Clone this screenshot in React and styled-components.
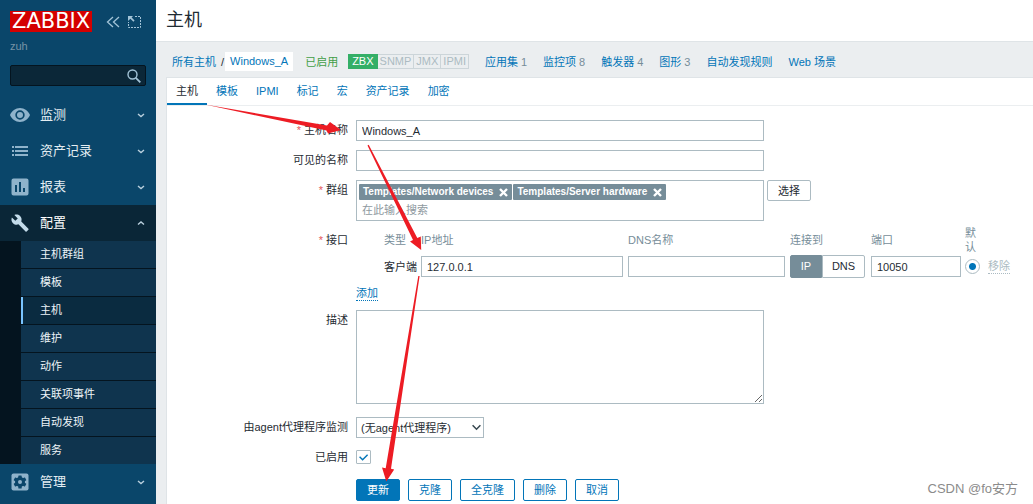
import React from "react";
import styled, { createGlobalStyle } from 'styled-components';

const GlobalStyle = createGlobalStyle`
* { box-sizing: border-box; }
body {
  margin: 0;
  background: #ebeef0;
  color: #1f2c33;
  font-family: "Liberation Sans", Arial, "Noto Sans CJK SC", sans-serif;
  font-size: 11px;
  line-height: 14px;
  overflow: hidden;
}
button, input, select, textarea { font: inherit; color: inherit; margin: 0; }
`;

const Page = styled.div`
display: flex;
position: relative;
height: 100vh;
overflow: hidden;
`;

const Sidebar = styled.aside`
display: flex;
flex-direction: column;
flex: 0 0 156px;
min-width: 0;
background: #0a466a;
`;

const SidebarHeader = styled.div`
display: flex;
align-items: center;
padding: 11px 14px 0 10px;
`;

const Logo = styled.a`
padding: 0 2px;
margin-right: 14px;
background: #d40000;
color: #fff;
font-family: "DejaVu Sans", sans-serif;
font-size: 21px;
line-height: 21px;
text-decoration: none;
`;

const IconButton = styled.button`
display: flex;
flex-shrink: 0;
padding: 0;
margin-left: ${props => props.$gap || 0}px;
border: 0;
background: none;
color: #a3c4d8;
cursor: pointer;
`;

const ServerName = styled.div`
padding: 7px 10px 0;
color: #7894a6;
`;

const SearchForm = styled.form`
display: flex;
align-items: center;
height: 21px;
margin: 12px 10px 11px;
padding-right: 4px;
border: 1px solid #04141f;
border-radius: 2px;
background: #0b2738;
`;

const SearchInput = styled.input`
flex: 1;
width: 100%;
min-width: 0;
border: 0;
outline: none;
background: none;
color: #fff;
`;

const MenuItem = styled.a`
display: flex;
align-items: center;
flex: 0 0 36px;
padding: 0 10px;
background: ${props => props.$active ? '#0a2637' : 'transparent'};
color: ${props => props.$active ? '#fff' : '#e4edf2'};
font-size: 13px;
text-decoration: none;
`;

const MenuIcon = styled.span`
display: flex;
justify-content: center;
width: 20px;
margin-right: 10px;
color: ${props => props.$active ? '#c3dbea' : '#8fb3cb'};
`;

const MenuText = styled.span`
flex: 1;
`;

const SubMenu = styled.nav`
display: flex;
flex-direction: column;
gap: 1px;
padding-left: 21px;
background: #04141f;
`;

const SubMenuItem = styled.a`
height: 27px;
padding-left: 17px;
border-left: 2px solid ${props => props.$selected ? '#79c4ff' : '#0f344e'};
background: ${props => props.$selected ? '#0a2b40' : '#0f344e'};
color: #eef4f8;
line-height: 26px;
text-decoration: none;
`;

const Main = styled.main`
flex: 1;
min-width: 0;
display: flex;
flex-direction: column;
`;

const TitleBar = styled.header`
height: 42px;
padding: 0 10px;
border-bottom: 1px solid #dfe4e7;
background: #fff;
`;

const Title = styled.h1`
margin: 0;
font-size: 18px;
font-weight: normal;
line-height: 40px;
`;

const Breadcrumbs = styled.nav`
display: flex;
align-items: center;
height: 35px;
padding: 4px 16px 0;
gap: 16px;
white-space: nowrap;
`;

const Path = styled.div`
display: flex;
align-items: center;
gap: 5px;
margin-right: -4px;
`;

const Link = styled.a`
color: #0275b8;
text-decoration: none;
`;

const CurrentHost = styled(Link)`
padding: 0 5px;
margin-left: -4px;
background: #fff;
line-height: 19px;
`;

const Status = styled.span`
color: #429e47;
margin-right: -6px;
`;

const Count = styled.span`
margin-left: 3px;
color: #768d99;
`;

const Availability = styled.div`
display: flex;
`;

const Badge = styled.span`
height: 15px;
padding: 0 ${props => props.$on ? 3 : 2}px;
border: 1px solid ${props => props.$on ? '#34af67' : '#ccd5d9'};
border-left-width: ${props => props.$on ? 1 : 0}px;
background: ${props => props.$on ? '#34af67' : '#ebeef0'};
color: ${props => props.$on ? '#fff' : '#acbbc2'};
line-height: 13px;
`;

const Card = styled.section`
flex: 1;
margin-left: 10px;
border: solid #dfe4e7;
border-width: 1px 0 0 1px;
background: #fff;
`;

const Tabs = styled.div`
display: flex;
border-bottom: 1px solid #ebeef0;
`;

const Tab = styled.button`
height: 27px;
padding: 0 9px;
border: 0;
border-bottom: 2px solid ${props => props.$active ? '#0275b8' : 'transparent'};
background: none;
color: ${props => props.$active ? '#1f2c33' : '#0275b8'};
cursor: pointer;
`;

const Form = styled.form`
display: grid;
grid-template-columns: 181px minmax(0, 1fr);
column-gap: 8px;
row-gap: 9px;
padding-top: 14px;
`;

const Label = styled.label`
padding-top: ${props => props.$top || 3}px;
text-align: right;
${props => props.$required && `
&::before { content: "* "; color: #e45959; }
`}
`;

const Field = styled.div`
display: flex;
align-items: flex-start;
gap: 3px;
padding-top: ${props => props.$top || 0}px;
`;

const TextInput = styled.input`
display: block;
width: ${props => props.$width || '408px'};
height: 21px;
padding: 0 5px;
border: 1px solid #acbbc2;
border-radius: 0;
background: #fff;
`;

const TextArea = styled.textarea`
width: 408px;
height: 94px;
padding: 4px 5px;
border: 1px solid #acbbc2;
`;

const MultiSelect = styled.div`
width: 408px;
height: 41px;
border: 1px solid #acbbc2;
`;

const Tags = styled.ul`
display: flex;
gap: 1px;
margin: 0;
padding: 3px 2px 2px;
list-style: none;
`;

const Tag = styled.li`
display: flex;
align-items: center;
height: 16px;
padding: 0 4px;
border-radius: 1px;
background: #768d99;
color: #fff;
font-weight: bold;
font-size: 10px;
`;

const TagRemove = styled.button`
display: flex;
padding: 0;
margin-left: 6px;
border: 0;
background: none;
`;

const GroupInput = styled.input`
display: block;
width: 100%;
height: 16px;
padding: 0 5px;
border: 0;
outline: none;
background: none;
&::placeholder { color: #8f9a9f; opacity: 1; }
`;

const Button = styled.button`
height: ${props => props.$grey ? 21 : 22}px;
padding: 0 10px;
border: 1px solid ${props => props.$grey ? '#acbbc2' : '#0275b8'};
border-radius: 2px;
background: ${props => props.$primary ? '#0275b8' : '#fff'};
color: ${props => props.$primary ? '#fff' : props.$grey ? '#1f2c33' : '#0275b8'};
line-height: 18px;
cursor: pointer;
`;

const Actions = styled.div`
grid-column: 2;
display: flex;
gap: 8px;
padding-top: 3px;
`;

const InterfaceBlock = styled.div`
display: flex;
flex-direction: column;
align-items: flex-start;
`;

const InterfaceTable = styled.table`
table-layout: fixed;
width: 656px;
border-collapse: collapse;
margin-top: -5px;
th {
  height: 29px;
  padding: 0;
  color: #768d99;
  font-weight: normal;
  text-align: left;
}
td {
  height: 25px;
  padding: 0;
}
th:first-child, td:first-child { padding-left: 28px; }
`;

const DefaultText = styled.div`
width: 12px;
`;

const Segments = styled.div`
display: flex;
width: 75px;
`;

const SegmentInput = styled.input`
appearance: none;
position: absolute;
`;

const Segment = styled.label`
flex: ${props => props.$active ? '0 0 32px' : 1};
height: 23px;
border: 1px solid ${props => props.$active ? '#768d99' : '#acbbc2'};
border-radius: ${props => props.$active ? '2px 0 0 2px' : '0 2px 2px 0'};
background: ${props => props.$active ? '#768d99' : '#fff'};
color: ${props => props.$active ? '#fff' : '#1f2c33'};
line-height: 21px;
text-align: center;
`;

const Radio = styled.input`
appearance: none;
display: block;
width: 15px;
height: 15px;
border: 1px solid #acbbc2;
border-radius: 50%;
background: radial-gradient(circle, #0275b8 3px, #fff 4px);
`;

const DottedLink = styled.button`
padding: 0;
border: 0;
border-bottom: 1px dotted;
background: none;
color: ${props => props.$disabled ? '#acbbc2' : '#0275b8'};
line-height: 14px;
cursor: pointer;
`;

const AddRow = styled.div`
padding-top: 7px;
`;

const SelectWrapper = styled.div`
position: relative;
width: 128px;
svg {
  position: absolute;
  right: 3px;
  top: 7px;
  pointer-events: none;
}
`;

const Select = styled.select`
appearance: none;
display: block;
width: 100%;
height: 21px;
padding: 0 18px 0 4px;
border: 1px solid #acbbc2;
border-radius: 0;
background: #fff;
`;

const CheckWrapper = styled.div`
position: relative;
height: 15px;
margin: 3px 0 2px;
svg {
  position: absolute;
  left: 3px;
  top: 4px;
  pointer-events: none;
}
`;

const Checkbox = styled.input`
appearance: none;
display: block;
width: 15px;
height: 14px;
border: 1px solid #acbbc2;
border-radius: 1px;
background: #fff;
`;

const Arrows = styled.svg`
position: absolute;
left: 0;
top: 0;
pointer-events: none;
`;

const Watermark = styled.div`
position: absolute;
right: 15px;
bottom: 7px;
color: #8b8b8b;
font-size: 13px;
line-height: 16px;
`;

const EyeIcon = () => (
    <svg width="20" height="14" viewBox="0 0 20 14">
        <path fill="currentColor" fillRule="evenodd" d="M10 0C5.500 0 1.700 2.900 0 7c1.700 4.100 5.500 7 10 7s8.300-2.900 10-7c-1.700-4.100-5.500-7-10-7zm0 11.700a4.700 4.700 0 1 1 0-9.400 4.700 4.700 0 0 1 0 9.400zM10 4a3 3 0 1 0 0 6 3 3 0 0 0 0-6z"/>
    </svg>
);

const ListIcon = () => (
    <svg width="18" height="12" viewBox="0 0 18 12" fill="currentColor">
        <path d="M1 1h2v2H1zM1 5h2v2H1zM1 9h2v2H1zM4 1h13v2H4zM4 5h13v2H4zM4 9h13v2H4z"/>
    </svg>
);

const ReportIcon = () => (
    <svg width="18" height="18" viewBox="0 0 18 18">
        <path fill="currentColor" fillRule="evenodd" d="M2.500.500h13a2 2 0 0 1 2 2v13a2 2 0 0 1-2 2h-13a2 2 0 0 1-2-2v-13a2 2 0 0 1 2-2zM4 7v7h2V7zm4-3v10h2V4zm4 6v4h2v-4z"/>
    </svg>
);

const WrenchIcon = () => (
    <svg width="18" height="18" viewBox="0 0 24 24">
        <path fill="currentColor" d="M23.200 19.500l-9.500-9.500c.9-2.400.4-5.200-1.600-7.200C10 .700 7 .300 4.500 1.400L9 5.900 5.800 9.100 1.200 4.600C0 7.100.600 10.100 2.700 12.200c2 2 4.800 2.500 7.200 1.600l9.500 9.400c.4.400 1 .4 1.400 0l2.400-2.300c.4-.4.4-1.100 0-1.400z"/>
    </svg>
);

const GearIcon = () => (
    <svg width="18" height="18" viewBox="0 0 18 18">
        <rect x=".5" y=".5" width="17" height="17" rx="2" fill="currentColor"/>
        <g fill="#0a466a">
            <circle cx="9" cy="9" r="5"/>
            {[0, 60, 120].map(angle => (
                <rect key={angle} x="7.300" y="2.500" width="3.400" height="13" rx=".6" transform={`rotate(${angle} 9 9)`}/>
            ))}
        </g>
        <circle cx="9" cy="9" r="2" fill="currentColor"/>
    </svg>
);

const Chevron = ({ up }) => (
    <svg width="10" height="6" viewBox="0 0 10 6" fill="none" stroke="#b9cfdd" strokeWidth="1.400">
        <path d={up ? "M2 4.500 5 2l3 2.500" : "M2 2l3 2.500L8 2"}/>
    </svg>
);

const CloseIcon = () => (
    <svg width="9" height="9" viewBox="0 0 9 9" stroke="#fff" strokeWidth="2.400">
        <path d="M1 1l7 7M8 1L1 8"/>
    </svg>
);

const subMenu = ['主机群组', '模板', '主机', '维护', '动作', '关联项事件', '自动发现', '服务'];
const tabs = ['主机', '模板', 'IPMI', '标记', '宏', '资产记录', '加密'];
const hostLinks = [
    ['应用集', 1],
    ['监控项', 8],
    ['触发器', 4],
    ['图形', 3],
    ['自动发现规则'],
    ['Web 场景'],
];

function MainMenuItem ({ icon, text, active }) {
    return (
        <MenuItem href="#" $active={active}>
            <MenuIcon $active={active}>{icon}</MenuIcon>
            <MenuText>{text}</MenuText>
            <Chevron up={active}/>
        </MenuItem>
    );
}

function AppSidebar () {
    return (
        <Sidebar>
            <SidebarHeader>
                <Logo href="#">ZABBIX</Logo>
                <IconButton aria-label="收起">
                    <svg width="14" height="12" viewBox="0 0 14 12" fill="none" stroke="currentColor" strokeWidth="1.300">
                        <path d="M7 1L1.500 6 7 11M13 1L7.500 6l5.500 5"/>
                    </svg>
                </IconButton>
                <IconButton aria-label="隐藏" $gap={8}>
                    <svg width="13" height="12" viewBox="0 0 13 12" fill="none" stroke="currentColor">
                        <path strokeDasharray="2 1" d="M7 .500h5.500v11H.500V6"/>
                        <path fill="currentColor" stroke="none" d="M0 0h5L3.600 1.500l3 3-1.200 1.200-3-3L0 5z"/>
                    </svg>
                </IconButton>
            </SidebarHeader>
            <ServerName>zuh</ServerName>
            <SearchForm>
                <SearchInput type="text" aria-label="搜索"/>
                <IconButton type="button" aria-label="搜索">
                    <svg width="14" height="14" viewBox="0 0 14 14" fill="none" stroke="currentColor">
                        <circle cx="5.500" cy="5.500" r="4.500" strokeWidth="1.400"/>
                        <path strokeWidth="1.800" d="M8.800 8.800l4.500 4.500"/>
                    </svg>
                </IconButton>
            </SearchForm>
            <MainMenuItem icon={<EyeIcon/>} text="监测"/>
            <MainMenuItem icon={<ListIcon/>} text="资产记录"/>
            <MainMenuItem icon={<ReportIcon/>} text="报表"/>
            <MainMenuItem icon={<WrenchIcon/>} text="配置" active/>
            <SubMenu>
                {subMenu.map((item, i) => (
                    <SubMenuItem key={item} href="#" $selected={i === 2}>{item}</SubMenuItem>
                ))}
            </SubMenu>
            <MainMenuItem icon={<GearIcon/>} text="管理"/>
        </Sidebar>
    );
}

function GroupTag ({ name }) {
    return (
        <Tag>
            {name}
            <TagRemove type="button" aria-label="移除"><CloseIcon/></TagRemove>
        </Tag>
    );
}

function Interfaces () {
    return (
        <InterfaceBlock>
            <InterfaceTable>
                <colgroup>
                    <col width="65"/>
                    <col width="207"/>
                    <col width="162"/>
                    <col width="81"/>
                    <col width="94"/>
                    <col width="23"/>
                    <col/>
                </colgroup>
                <thead>
                    <tr>
                        <th>类型</th>
                        <th>IP地址</th>
                        <th>DNS名称</th>
                        <th>连接到</th>
                        <th>端口</th>
                        <th><DefaultText>默认</DefaultText></th>
                        <th></th>
                    </tr>
                </thead>
                <tbody>
                    <tr>
                        <td>客户端</td>
                        <td><TextInput aria-label="IP地址" $width="202px" defaultValue="127.0.0.1"/></td>
                        <td><TextInput aria-label="DNS名称" $width="157px"/></td>
                        <td>
                            <Segments>
                                <SegmentInput type="radio" name="useip" id="use-ip" defaultChecked/>
                                <Segment htmlFor="use-ip" $active>IP</Segment>
                                <SegmentInput type="radio" name="useip" id="use-dns"/>
                                <Segment htmlFor="use-dns">DNS</Segment>
                            </Segments>
                        </td>
                        <td><TextInput aria-label="端口" $width="90px" defaultValue="10050"/></td>
                        <td><Radio type="radio" name="default" aria-label="默认" defaultChecked/></td>
                        <td><DottedLink type="button" $disabled>移除</DottedLink></td>
                    </tr>
                </tbody>
            </InterfaceTable>
            <AddRow><DottedLink type="button">添加</DottedLink></AddRow>
        </InterfaceBlock>
    );
}

function ProxySelect () {
    return (
        <SelectWrapper>
            <Select id="proxy">
                <option>(无agent代理程序)</option>
            </Select>
            <svg width="9" height="7" viewBox="0 0 9 7" fill="none" stroke="#37474f" strokeWidth="1.500">
                <path d="M.600 1.200l3.900 4 3.900-4"/>
            </svg>
        </SelectWrapper>
    );
}

function HostForm () {
    return (
        <Form>
            <Label htmlFor="host" $required>主机名称</Label>
            <Field><TextInput id="host" defaultValue="Windows_A"/></Field>

            <Label htmlFor="visible">可见的名称</Label>
            <Field><TextInput id="visible"/></Field>

            <Label htmlFor="groups" $required>群组</Label>
            <Field>
                <MultiSelect>
                    <Tags>
                        <GroupTag name="Templates/Network devices"/>
                        <GroupTag name="Templates/Server hardware"/>
                    </Tags>
                    <GroupInput id="groups" placeholder="在此输入搜索"/>
                </MultiSelect>
                <Button type="button" $grey>选择</Button>
            </Field>

            <Label as="span" $required>接口</Label>
            <Interfaces/>

            <Label htmlFor="description">描述</Label>
            <Field><TextArea id="description"/></Field>

            <Label htmlFor="proxy" $top={7}>由agent代理程序监测</Label>
            <Field $top={4}>
                <ProxySelect/>
            </Field>

            <Label htmlFor="enabled">已启用</Label>
            <CheckWrapper>
                <Checkbox type="checkbox" id="enabled" defaultChecked/>
                <svg width="10" height="7" viewBox="0 0 10 7" fill="none" stroke="#0275b8" strokeWidth="1.400">
                    <path d="M.600 2.800L3.600 5.800 8.600.800"/>
                </svg>
            </CheckWrapper>

            <Actions>
                <Button type="button" $primary>更新</Button>
                <Button type="button">克隆</Button>
                <Button type="button">全克隆</Button>
                <Button type="button">删除</Button>
                <Button type="button">取消</Button>
            </Actions>
        </Form>
    );
}

function App () {
    return (
        <Page>
            <GlobalStyle/>
            <AppSidebar/>
            <Main>
                <TitleBar><Title>主机</Title></TitleBar>
                <Breadcrumbs>
                    <Path>
                        <Link href="#">所有主机</Link>
                        <span>/</span>
                        <CurrentHost href="#">Windows_A</CurrentHost>
                    </Path>
                    <Status>已启用</Status>
                    <Availability>
                        <Badge $on>ZBX</Badge>
                        <Badge>SNMP</Badge>
                        <Badge>JMX</Badge>
                        <Badge>IPMI</Badge>
                    </Availability>
                    {hostLinks.map(([text, count]) => (
                        <span key={text}>
                            <Link href="#">{text}</Link>
                            {count && <Count>{count}</Count>}
                        </span>
                    ))}
                </Breadcrumbs>
                <Card>
                    <Tabs>
                        {tabs.map((tab, i) => (
                            <Tab key={tab} type="button" $active={i === 0}>{tab}</Tab>
                        ))}
                    </Tabs>
                    <HostForm/>
                </Card>
            </Main>
            <Arrows width="440" height="490" viewBox="0 0 440 490" fill="#ed1c24">
                <path d="M205 104.500L327 125.500 330 122 341 130 328 133.500 326.500 130.500z"/>
                <path d="M367.500 145.500L368.700 144.700 417.300 238 420.800 236.500 421.200 250 410 241.500 413 240z"/>
                <path d="M418.300 276L419.600 276 391 468.800 394.200 469.500 386.300 481.500 382 467.500 385.700 468.300z"/>
            </Arrows>
            <Watermark>CSDN @fo安方</Watermark>
        </Page>
    );
}

export default App;
